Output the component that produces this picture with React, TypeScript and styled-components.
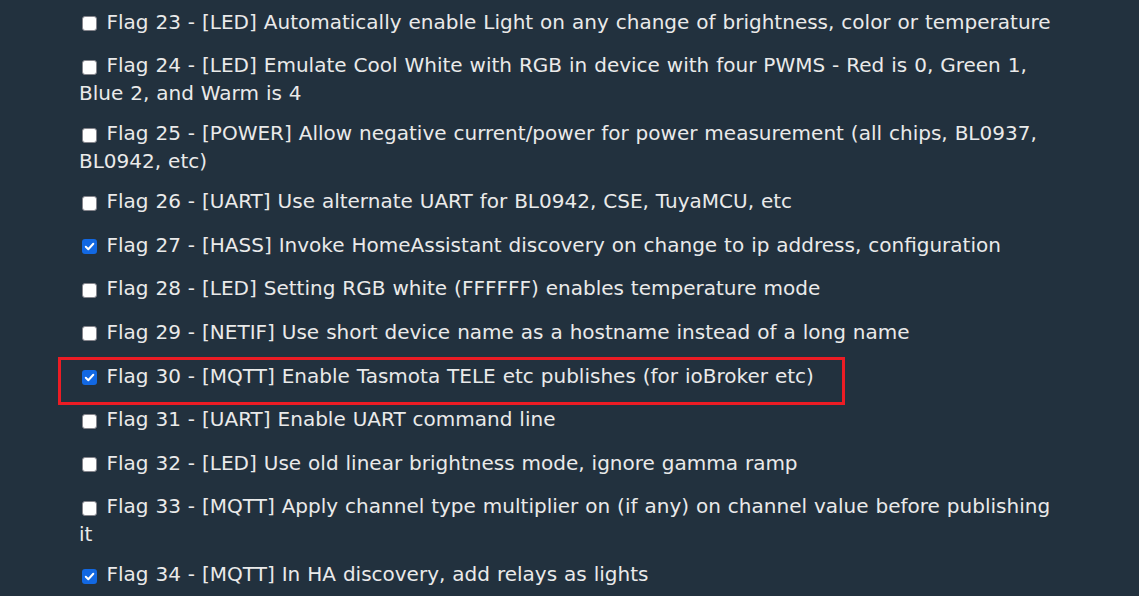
import React from "react";
import styled, { createGlobalStyle } from "styled-components";

const GlobalStyle = createGlobalStyle`
  html, body {
    margin: 0;
    padding: 0;
    background: #22313e;
  }
  body {
    font-family: "DejaVu Sans", Verdana, sans-serif;
    color: #eaeaea;
  }
`;

const Page = styled.div`
  width: 1139px;
  height: 596px;
  overflow: hidden;
  background: #22313e;
  box-sizing: border-box;
  padding: 9.9px 0 0 79px;
`;

const List = styled.div`
  width: 979px;
  display: flex;
  flex-direction: column;
  gap: 16px;
`;

const Item = styled.div`
  position: relative;
  font-size: 20px;
  line-height: 24.3px;
  word-spacing: 0.6px;
  text-align: left;
`;

const Box = styled.span<{ $checked: boolean }>`
  display: inline-block;
  box-sizing: border-box;
  width: 15px;
  height: 15px;
  margin: 3px 3px 6.3px 2.5px;
  vertical-align: -8.6px;
  border-radius: 3px;
  background: ${(p) => (p.$checked ? "#1268e3" : "#ffffff")};
  border: ${(p) => (p.$checked ? "none" : "1.5px solid #85858c")};
  position: relative;
  svg {
    position: absolute;
    left: 2px;
    top: 2px;
    width: 11px;
    height: 11px;
  }
`;

const Highlight = styled.div`
  position: absolute;
  left: -21px;
  top: -6.4px;
  width: 787px;
  height: 48px;
  box-sizing: border-box;
  border: 3.5px solid #ec1c24;
  pointer-events: none;
`;

type Flag = { n: number; text: string; checked: boolean; mark?: boolean };

const flags: Flag[] = [
  { n: 23, text: "[LED] Automatically enable Light on any change of brightness, color or temperature", checked: false },
  { n: 24, text: "[LED] Emulate Cool White with RGB in device with four PWMS - Red is 0, Green 1, Blue 2, and Warm is 4", checked: false },
  { n: 25, text: "[POWER] Allow negative current/power for power measurement (all chips, BL0937, BL0942, etc)", checked: false },
  { n: 26, text: "[UART] Use alternate UART for BL0942, CSE, TuyaMCU, etc", checked: false },
  { n: 27, text: "[HASS] Invoke HomeAssistant discovery on change to ip address, configuration", checked: true },
  { n: 28, text: "[LED] Setting RGB white (FFFFFF) enables temperature mode", checked: false },
  { n: 29, text: "[NETIF] Use short device name as a hostname instead of a long name", checked: false },
  { n: 30, text: "[MQTT] Enable Tasmota TELE etc publishes (for ioBroker etc)", checked: true, mark: true },
  { n: 31, text: "[UART] Enable UART command line", checked: false },
  { n: 32, text: "[LED] Use old linear brightness mode, ignore gamma ramp", checked: false },
  { n: 33, text: "[MQTT] Apply channel type multiplier on (if any) on channel value before publishing it", checked: false },
  { n: 34, text: "[MQTT] In HA discovery, add relays as lights", checked: true },
];

const Check = () => (
  <svg viewBox="0 0 11 11">
    <path d="M1.8 5.8 L4.3 8.2 L9.3 2.8" fill="none" stroke="#ffffff" strokeWidth="2" strokeLinecap="round" strokeLinejoin="round" />
  </svg>
);

export default function App() {
  return (
    <>
      <GlobalStyle />
      <Page>
        <List>
          {flags.map((f) => (
            <Item key={f.n}>
              {f.mark && <Highlight />}
              <Box $checked={f.checked}>{f.checked && <Check />}</Box> Flag {f.n} - {f.text}
            </Item>
          ))}
        </List>
      </Page>
    </>
  );
}
